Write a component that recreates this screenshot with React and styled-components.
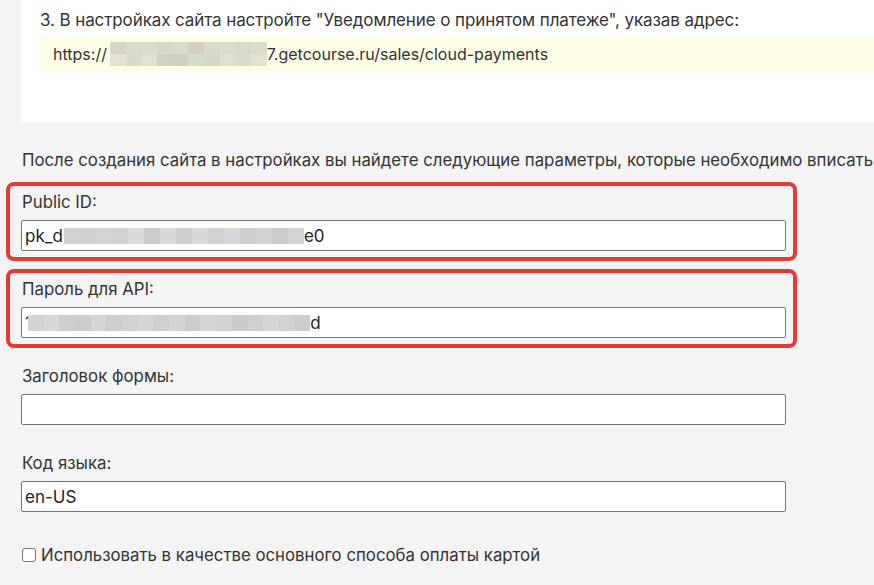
import React from 'react';
import styled, { createGlobalStyle } from 'styled-components';

const GlobalStyle = createGlobalStyle`
    html, body {
        margin: 0;
        padding: 0;
        background: #f4f4f4;
        overflow: hidden;
    }
    body {
        font-family: Inter, "Noto Sans", sans-serif;
        color: #333;
    }
`;

const Page = styled.div`
    width: 1000px;
    height: 585px;
`;

const Card = styled.div`
    margin-left: 21px;
    background: #fff;
    padding: 10px 0 50px 19px;
`;

const Step = styled.p`
    margin: 0 0 6px;
    font-size: 17px;
    line-height: 20px;
    letter-spacing: -0.1px;
    color: #333;
`;

const UrlBox = styled.div`
    background: #fefee8;
    height: 36px;
    display: flex;
    align-items: center;
    padding-left: 13px;
    font-size: 16px;
    color: #333;
`;

const Form = styled.div`
    padding: 28px 0 0 22px;
    width: 764px;
    display: flex;
    flex-direction: column;
`;

const Intro = styled.p`
    margin: 0 0 22px;
    font-size: 16.8px;
    line-height: 20px;
    white-space: nowrap;
    color: #333;
`;

const Field = styled.div`
    position: relative;
    margin-bottom: ${({ $last }) => ($last ? '29px' : '28px')};

    ${({ $highlight }) =>
        $highlight &&
        `
        &::before {
            content: '';
            position: absolute;
            left: -16px;
            right: -11px;
            top: -10px;
            bottom: -10px;
            border: 4px solid #e53a33;
            border-radius: 8px;
            pointer-events: none;
        }
    `}
`;

const Label = styled.div`
    font-size: 16.8px;
    line-height: 20px;
    color: #333;
    margin-bottom: 8px;
`;

const Input = styled.div`
    box-sizing: border-box;
    height: 31px;
    margin-left: -1px;
    background: #fff;
    border: 1px solid #767676;
    border-radius: 2px;
    display: flex;
    align-items: center;
    padding-left: 3px;
    font-size: 17px;
    color: #222;
    white-space: nowrap;
    overflow: hidden;
`;

const Blur = styled.span`
    display: inline-flex;
    flex-direction: column;
    flex-shrink: 0;
    height: ${({ $h }) => $h}px;
    margin: 0 ${({ $mr }) => $mr || 0}px 0 ${({ $ml }) => $ml || 0}px;
`;

const BlurRow = styled.span`
    display: flex;
    flex: 1;
`;

const Cell = styled.span`
    display: block;
    width: ${({ $w }) => $w}px;
    background: ${({ $c }) => $c};
`;

const CheckRow = styled.label`
    display: flex;
    align-items: center;
    gap: 5px;
    margin-top: 4px;
    font-size: 16.8px;
    color: #333;
`;

const Box = styled.span`
    width: 14px;
    height: 14px;
    box-sizing: border-box;
    border: 1px solid #767676;
    border-radius: 3px;
    background: #fff;
`;

const Pixelated = ({ rows, w, h, ml, mr }) => (
    <Blur $h={h} $ml={ml} $mr={mr}>
        {rows.map((row, i) => (
            <BlurRow key={i}>
                {row.map((c, j) => (
                    <Cell key={j} $w={w} $c={c} />
                ))}
            </BlurRow>
        ))}
    </Blur>
);

const urlBlur = [
    ['#d6d6c6', '#dcdccc', '#dcdccc', '#d8d8c8', '#dcdccc', '#d4d0c0', '#dadaca', '#dcdccc', '#dadaca', '#dcdccc'],
    ['#e2e2d2', '#dadaca', '#e2e2d2', '#d2d2c2', '#d0d0c0', '#dadaca', '#d8d8c8', '#e0e0d0', '#dcdccc', '#e2e2d2'],
];

const idBlur = [[
    '#d2d2d2', '#d0d0d0', '#d6d6d6', '#d2d2d2', '#dadada', '#cccccc', '#d8d8d8', '#cfcfcf',
    '#d8d8d8', '#d4d2d0', '#d4d8da', '#cecece', '#d4d4d4', '#cccccc', '#d6d6d6',
]];

const keyBlur = [[
    '#d4d4d4', '#d8d8d8', '#cecece', '#cccccc', '#d6d6d6', '#cfcfcf', '#d2d2d2', '#d6d6d6',
    '#d0d0d0', '#d4d4d4', '#cccccc', '#d6d6d6', '#d2d2d2', '#cbcbcb', '#d0d0d0', '#d6d6d6',
    '#d2d2d2', '#cccccc',
]];

export default function App() {
    return (
        <Page>
            <GlobalStyle />
            <Card>
                <Step>3. В настройках сайта настройте "Уведомление о принятом платеже", указав адрес:</Step>
                <UrlBox>
                    https://
                    <Pixelated rows={urlBlur} w={15.7} h={24} ml={3} />
                    7.getcourse.ru/sales/cloud-payments
                </UrlBox>
            </Card>
            <Form>
                <Intro>После создания сайта в настройках вы найдете следующие параметры, которые необходимо вписать</Intro>
                <Field $highlight>
                    <Label>Public ID:</Label>
                    <Input>
                        pk_d
                        <Pixelated rows={idBlur} w={16} h={16} ml={1} />
                        e0
                    </Input>
                </Field>
                <Field $highlight>
                    <Label>Пароль для API:</Label>
                    <Input>
                        1
                        <Pixelated rows={keyBlur} w={15.7} h={16} ml={-4} />
                        d
                    </Input>
                </Field>
                <Field>
                    <Label>Заголовок формы:</Label>
                    <Input />
                </Field>
                <Field $last>
                    <Label>Код языка:</Label>
                    <Input>en-US</Input>
                </Field>
                <CheckRow>
                    <Box />
                    Использовать в качестве основного способа оплаты картой
                </CheckRow>
            </Form>
        </Page>
    );
}
